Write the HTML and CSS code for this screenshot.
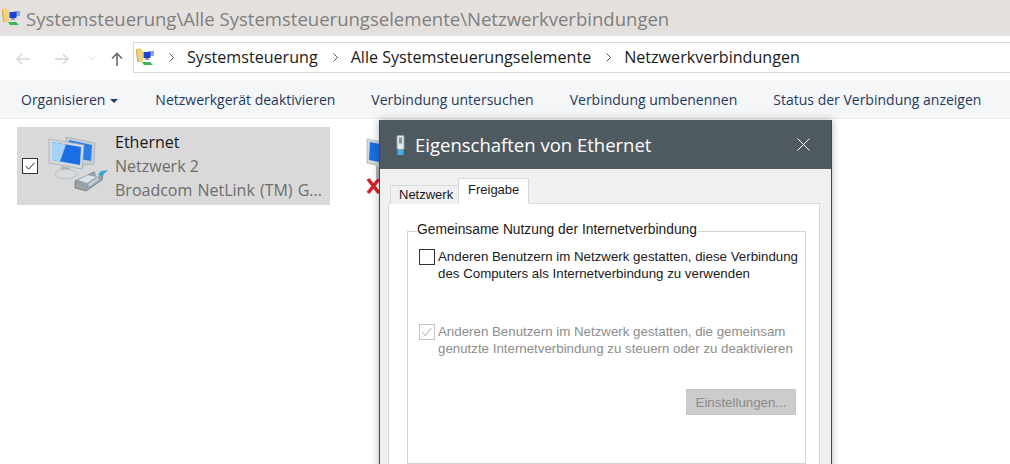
FILE: index.html
```html
<!DOCTYPE html>
<html lang="de">
<head>
<meta charset="utf-8">
<title>Netzwerkverbindungen</title>
<link rel="stylesheet" href="styles.css">
</head>
<body>
<div class="app">
  <header class="titlebar">
    <svg class="ico-cp" viewBox="0 0 20 20"><path d="M0 1l4-1 3 3v11H2z" fill="#efd27c"/><path d="M0 1l2 13" stroke="#c9a648" fill="none"/><rect x="12" y="3" width="6" height="5" fill="#8aa4d8"/><rect x="7.500" y="4" width="7" height="6" fill="#1c3fd8"/><rect x="9" y="10" width="4" height="2" fill="#8b93a8"/><path d="M6 14h8l3 3H8z" fill="#39b85a"/></svg>
    <span class="titletext">Systemsteuerung\Alle Systemsteuerungselemente\Netzwerkverbindungen</span>
  </header>
  <nav class="navbar">
    <div class="navbtns">
      <svg class="nav-arrow" viewBox="0 0 16 12"><path d="M15 6H2M7 1L2 6l5 5" fill="none" stroke="#d5d5d5" stroke-width="1.400"/></svg>
      <svg class="nav-arrow" viewBox="0 0 16 12"><path d="M1 6h13M9 1l5 5-5 5" fill="none" stroke="#d5d5d5" stroke-width="1.400"/></svg>
      <svg class="nav-caret" viewBox="0 0 8 5"><path d="M.5.500L4 4 7.500.500" fill="none" stroke="#d5d5d5"/></svg>
      <svg class="nav-up" viewBox="0 0 12 14"><path d="M6 14V1.500M1 6.500l5-5 5 5" fill="none" stroke="#6a6a6a" stroke-width="1.600"/></svg>
    </div>
    <div class="address">
      <svg class="ico-cp small" viewBox="0 0 20 20"><path d="M0 1l4-1 3 3v11H2z" fill="#efd27c"/><path d="M0 1l2 13" stroke="#c9a648" fill="none"/><rect x="12" y="3" width="6" height="5" fill="#8aa4d8"/><rect x="7.500" y="4" width="7" height="6" fill="#1c3fd8"/><rect x="9" y="10" width="4" height="2" fill="#8b93a8"/><path d="M6 14h8l3 3H8z" fill="#39b85a"/></svg>
      <svg class="crumb-sep" viewBox="0 0 5 9"><path d="M.5.500l4 4-4 4" fill="none" stroke="#555"/></svg>
      <span class="crumb">Systemsteuerung</span>
      <svg class="crumb-sep" viewBox="0 0 5 9"><path d="M.5.500l4 4-4 4" fill="none" stroke="#555"/></svg>
      <span class="crumb">Alle Systemsteuerungselemente</span>
      <svg class="crumb-sep" viewBox="0 0 5 9"><path d="M.5.500l4 4-4 4" fill="none" stroke="#555"/></svg>
      <span class="crumb">Netzwerkverbindungen</span>
    </div>
  </nav>
  <div class="toolbar">
    <span class="tool first">Organisieren<i class="caret"></i></span>
    <span class="tool">Netzwerkgerät deaktivieren</span>
    <span class="tool">Verbindung untersuchen</span>
    <span class="tool">Verbindung umbenennen</span>
    <span class="tool">Status der Verbindung anzeigen</span>
  </div>
  <main class="content">
    <div class="conn selected">
      <span class="conn-check"><svg viewBox="0 0 16 16"><path d="M3 8l3.500 3.500L13 4.500" fill="none" stroke="#222" stroke-width="1.100"/></svg></span>
      <svg class="conn-icon" viewBox="0 0 70 70">
        <path d="M22 7l29 6-1 21-10 1-2 4-14-4z" fill="#c4ccd4" stroke="#a3adb6" stroke-width=".7"/>
        <path d="M25 10l23 5-1 16-22-4z" fill="#2a7de6"/>
        <path d="M5 9l35 6-2 24-33-6z" fill="#d3d8dd" stroke="#a3adb6" stroke-width=".7"/>
        <path d="M8 12l29 5-1 18-28-5z" fill="#1a6de4"/>
        <path d="M8 12l14 2.500-6 17-8-1.500z" fill="#a6d2f8"/>
        <path d="M17 36l9 2v5l-9-2z" fill="#aeb4b9"/>
        <ellipse cx="22" cy="44" rx="11" ry="4.800" fill="#d8dbde" stroke="#a9aeb3" stroke-width=".6"/>
        <path d="M31 51l19-9 9 2-1 6-16 11-11-3z" fill="#95a1ab" stroke="#69757f" stroke-width=".7"/>
        <path d="M34 50l10-5 8 2-9 6z" fill="#dde2e6"/>
        <path d="M44 54l10-7 1 3-10 7z" fill="#c4ccd3"/>
        <path d="M33 55l7 3" stroke="#c9a93c" stroke-width="1.600" stroke-dasharray="1.200 .8"/>
        <path d="M51 42l5-3-1 7-3 1z" fill="#cfd6db"/>
        <path d="M54 45l3-4 7-1-3 3-3 3z" fill="#3aa6cc"/>
      </svg>
      <div class="conn-text">
        <div class="conn-name">Ethernet</div>
        <div class="conn-sub">Netzwerk 2</div>
        <div class="conn-sub device">Broadcom NetLink (TM) G...</div>
      </div>
    </div>
    <div class="conn second">
      <svg class="conn-icon" viewBox="0 0 70 70">
        <path d="M7 9l25 5v25l-25-6z" fill="#d3d8dd" stroke="#a3adb6" stroke-width=".7"/>
        <path d="M10 12l20 4v18l-21-4z" fill="#1a6de4"/>
        <path d="M16 36l9 2v12l-9-2z" fill="#b4b9bd"/>
        <path d="M8 49l11 14M19 49L8 63" stroke="#d8232a" stroke-width="3.600" fill="none"/>
      </svg>
    </div>
  </main>
  <section class="dialog">
    <header class="dlg-head">
      <svg class="dlg-icon" viewBox="0 0 9 20"><rect x="1" y=".500" width="7" height="14" rx="1" fill="#e3e8ec" stroke="#8fa0aa"/><rect x="3" y="2.500" width="3" height="6" fill="#8496a1"/><path d="M1.500 15h6v5h-6z" fill="#3fb4e2"/></svg>
      <h1 class="dlg-title">Eigenschaften von Ethernet</h1>
      <svg class="dlg-close" viewBox="0 0 13 13"><path d="M.5.500l12 12M12.500.500l-12 12" stroke="#fff" fill="none"/></svg>
    </header>
    <div class="dlg-body">
      <div class="tabs">
        <span class="tab">Netzwerk</span>
        <span class="tab active">Freigabe</span>
      </div>
      <div class="panel">
        <fieldset class="group">
          <legend class="legend">Gemeinsame Nutzung der Internetverbindung</legend>
          <div class="opt">
            <span class="box"></span>
            <span class="opt-text">Anderen Benutzern im Netzwerk gestatten, diese Verbindung<br>des Computers als Internetverbindung zu verwenden</span>
          </div>
          <div class="opt disabled">
            <span class="box checked"><svg viewBox="0 0 16 16"><path d="M2.500 8l3.500 4L13 3.500" fill="none" stroke="#b8b8b8" stroke-width="1.200"/></svg></span>
            <span class="opt-text">Anderen Benutzern im Netzwerk gestatten, die gemeinsam<br>genutzte Internetverbindung zu steuern oder zu deaktivieren</span>
          </div>
          <div class="btn-row"><span class="btn">Einstellungen...</span></div>
        </fieldset>
      </div>
    </div>
  </section>
</div>
</body>
</html>
```
FILE: styles.css
```css
* { box-sizing: border-box; }
html, body { margin: 0; height: 100%; overflow: hidden; background: #fff; }
.app { position: relative; width: 1010px; height: 464px; overflow: hidden; font-family: "Open Sans", "Noto Sans", "Liberation Sans", sans-serif; }

.titlebar { height: 36px; background: #e4e0de; display: flex; align-items: center; padding-left: 2px; }
.ico-cp { width: 20px; height: 20px; flex: none; margin-right: 4px; filter: blur(.4px); }
.ico-cp.small { margin: 0 13px 0 0; }
.titletext { font-size: 18.550px; color: #7f7f7f; white-space: nowrap; }

.navbar { height: 44px; display: flex; align-items: flex-start; padding-top: 6px; }
.navbtns { width: 133px; height: 31px; flex: none; display: flex; align-items: center; padding-top: 2px; }
.nav-arrow { width: 16px; height: 12px; margin-left: 15px; }
.nav-arrow + .nav-arrow { margin-left: 23px; }
.nav-caret { width: 9px; height: 5px; margin-left: 17px; }
.nav-up { width: 12px; height: 14px; margin-left: 15px; }
.address { flex: 1; height: 31px; border: 1px solid #d9d9d9; border-right: 0; display: flex; align-items: center; padding-left: 2px; }
.crumb { font-size: 16.100px; color: #1a1a1a; white-space: nowrap; margin: -2px 15px 0 0; }
.crumb-sep { width: 5px; height: 9px; margin-right: 13px; flex: none; }

.toolbar { height: 39px; background: #f5f6f7; border-bottom: 1px solid #eceded; display: flex; align-items: center; padding-left: 21px; gap: 36px; }
.tool { font-size: 14px; color: #1e3a5f; white-space: nowrap; }
.tool.first { margin-right: 1px; }
.caret { display: inline-block; border: 4px solid transparent; border-top-color: #1e3a5f; border-bottom: 0; margin-left: 5px; vertical-align: 2px; }

.content { display: flex; padding: 8px 0 0 17px; gap: 30px; }
.conn { display: flex; align-items: center; height: 78px; }
.conn.selected { width: 313px; background: #d9d9d9; padding-left: 5px; }
.conn-check { width: 16px; height: 16px; border: 1px solid #333; background: #fff; flex: none; display: flex; }
.conn-check svg { width: 14px; height: 14px; }
.conn-icon { width: 70px; height: 70px; flex: none; margin: -2px 0 0 6px; filter: blur(.4px); }
.conn.second .conn-icon { margin-left: 0; }
.conn-text { margin-left: 1px; font-size: 16px; line-height: 24px; white-space: nowrap; }
.conn-name { color: #1a1a1a; }
.conn-sub { color: #6d6d6d; }
.conn-sub.device { word-spacing: 1px; }

.dialog { position: absolute; left: 379px; top: 120px; width: 453px; height: 370px; border: 1px solid #3f464b; border-top: 0; box-shadow: 0 0 8px rgba(0,0,0,.3); background: #f0f0f0; display: flex; flex-direction: column; }
.dlg-head { height: 49px; background: #4f5a60; display: flex; align-items: center; padding: 0 21px 0 16px; flex: none; }
.dlg-icon { width: 9px; height: 20px; flex: none; }
.dlg-title { font-size: 18.500px; font-weight: 400; color: #fff; margin: 0 0 0 10px; flex: 1; white-space: nowrap; }
.dlg-close { width: 13px; height: 13px; }
.dlg-body { padding: 9px 11px 0 8px; flex: 1; display: flex; flex-direction: column; font-family: "Liberation Sans", Arial, sans-serif; font-size: 13px; color: #1a1a1a; }
.tabs { display: flex; height: 26px; padding-left: 2px; align-items: flex-end; position: relative; z-index: 1; margin-bottom: -1px; }
.tab { height: 19px; width: 69px; padding-left: 8px; background: #f0f0f0; border: 1px solid #d9d9d9; border-bottom: 0; line-height: 17px; font-size: 13px; }
.tab.active { height: 26px; width: 71px; padding-left: 9px; background: #fff; line-height: 21px; margin-left: -1px; border-bottom: 1px solid #fff; }
.panel { flex: 1; background: #fff; border: 1px solid #d9d9d9; padding: 18px 13px 0 18px; }
.group { margin: 0; height: 242px; border: 1px solid #d4d4d4; padding: 9px 7px 0 11px; min-width: 0; }
.legend { padding: 0 1px 2px 0; margin-left: -2px; font-size: 13.800px; line-height: 16px; white-space: nowrap; }
.opt { display: flex; gap: 3px; line-height: 16.500px; font-size: 13.300px; white-space: nowrap; }
.opt.disabled { color: #8d8d8d; margin-top: 42px; }
.box { width: 16px; height: 16px; border: 1px solid #333; background: #fff; flex: none; display: flex; }
.box.checked { border-color: #c4c4c4; }
.box svg { width: 14px; height: 14px; }
.btn-row { display: flex; justify-content: flex-end; margin-top: 32px; padding-right: 2px; }
.btn { width: 110px; height: 26px; background: #cccccc; color: #8a8a8a; border: 1px solid #c6c6c6; text-align: center; line-height: 25px; font-size: 13.300px; }
```
